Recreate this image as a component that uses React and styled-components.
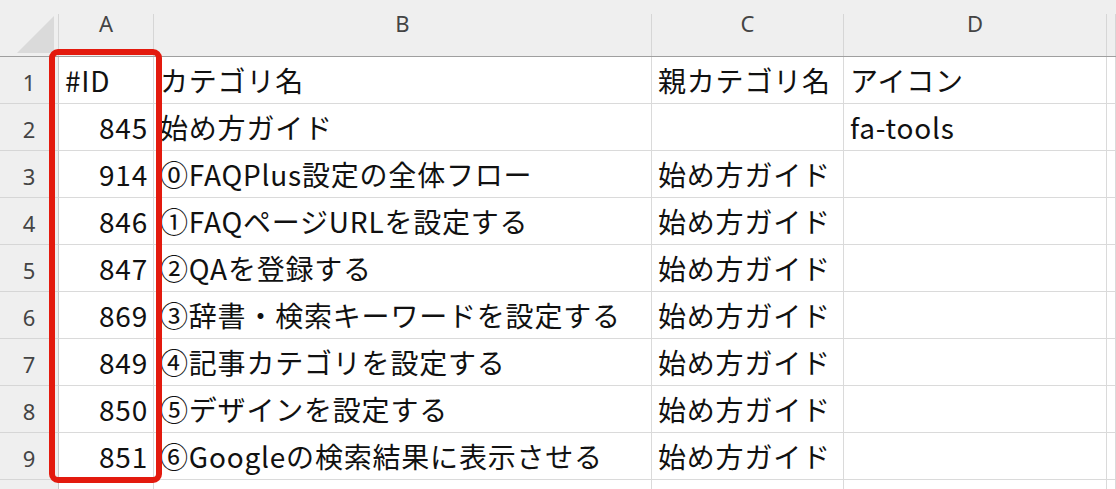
import React from "react";
import styled, { createGlobalStyle } from "styled-components";

const Global = createGlobalStyle`
  html, body { margin: 0; padding: 0; background: #ffffff; overflow: hidden; }
  body { font-family: "Noto Sans CJK JP", "Noto Sans", sans-serif; }
`;

const COLS = "59px 95px 498px 192px 263px 1fr";

const Sheet = styled.div`
  position: relative;
  width: 1116px;
  height: 489px;
  overflow: hidden;
  background: #ffffff;
`;

const TopStrip = styled.div`
  height: 14px;
  background: #efefef;
`;

const Grid = styled.div`
  display: grid;
  grid-template-columns: ${COLS};
  grid-auto-rows: 47px;
`;

const HeaderRow = styled.div`
  display: grid;
  grid-template-columns: ${COLS};
  height: 43px;
  background: #efefef;
  border-bottom: 1px solid #9f9f9f;
  box-sizing: border-box;
`;

const Corner = styled.div`
  position: relative;
  border-right: 1px solid #d6d6d6;
  &::after {
    content: "";
    position: absolute;
    right: 4px;
    bottom: 3px;
    width: 0;
    height: 0;
    border-left: 37px solid transparent;
    border-bottom: 37px solid #dadada;
  }
`;

const ColHead = styled.div`
  display: flex;
  align-items: flex-start;
  justify-content: center;
  border-right: 1px solid #d6d6d6;
  font-family: "Noto Sans", "Noto Sans CJK JP", sans-serif;
  font-size: 22px;
  line-height: 18px;
  color: #444444;
`;

const RowHead = styled.div`
  display: flex;
  align-items: center;
  justify-content: center;
  background: #efefef;
  border-right: 1px solid #c8c8c8;
  border-bottom: 1px solid #d6d6d6;
  font-family: "Noto Sans", "Noto Sans CJK JP", sans-serif;
  font-size: 22px;
  color: #444444;
  padding-top: 3px;
  box-sizing: border-box;
`;

const Cell = styled.div`
  display: flex;
  align-items: center;
  justify-content: ${(p) => (p.$num ? "flex-end" : "flex-start")};
  padding: 0 ${(p) => (p.$num ? "5px" : "0")} 0 ${(p) => (p.$num ? "0" : "6px")};
  border-right: 1px solid #dadada;
  border-bottom: 1px solid #dadada;
  box-sizing: border-box;
  font-size: 28px;
  color: #111111;
  white-space: nowrap;
  overflow: visible;
  letter-spacing: 0.8px;
`;

const Highlight = styled.div`
  position: absolute;
  left: 49px;
  top: 49px;
  width: 113px;
  height: 434px;
  box-sizing: border-box;
  border: 6px solid #e31a0e;
  border-radius: 9px;
  pointer-events: none;
`;

const rows = [
  ["#ID", "カテゴリ名", "親カテゴリ名", "アイコン"],
  [845, "始め方ガイド", "", "fa-tools"],
  [914, "⓪FAQPlus設定の全体フロー", "始め方ガイド", ""],
  [846, "①FAQページURLを設定する", "始め方ガイド", ""],
  [847, "②QAを登録する", "始め方ガイド", ""],
  [869, "③辞書・検索キーワードを設定する", "始め方ガイド", ""],
  [849, "④記事カテゴリを設定する", "始め方ガイド", ""],
  [850, "⑤デザインを設定する", "始め方ガイド", ""],
  [851, "⑥Googleの検索結果に表示させる", "始め方ガイド", ""],
  ["", "", "", ""],
];

export default function App() {
  return (
    <Sheet>
      <Global />
      <TopStrip />
      <HeaderRow>
        <Corner />
        <ColHead>A</ColHead>
        <ColHead>B</ColHead>
        <ColHead>C</ColHead>
        <ColHead>D</ColHead>
        <ColHead />
      </HeaderRow>
      <Grid>
        {rows.map((r, i) => (
          <React.Fragment key={i}>
            <RowHead>{i < 9 ? i + 1 : ""}</RowHead>
            <Cell $num={typeof r[0] === "number"}>{r[0]}</Cell>
            <Cell>{r[1]}</Cell>
            <Cell>{r[2]}</Cell>
            <Cell>{r[3]}</Cell>
            <Cell />
          </React.Fragment>
        ))}
      </Grid>
      <Highlight />
    </Sheet>
  );
}
